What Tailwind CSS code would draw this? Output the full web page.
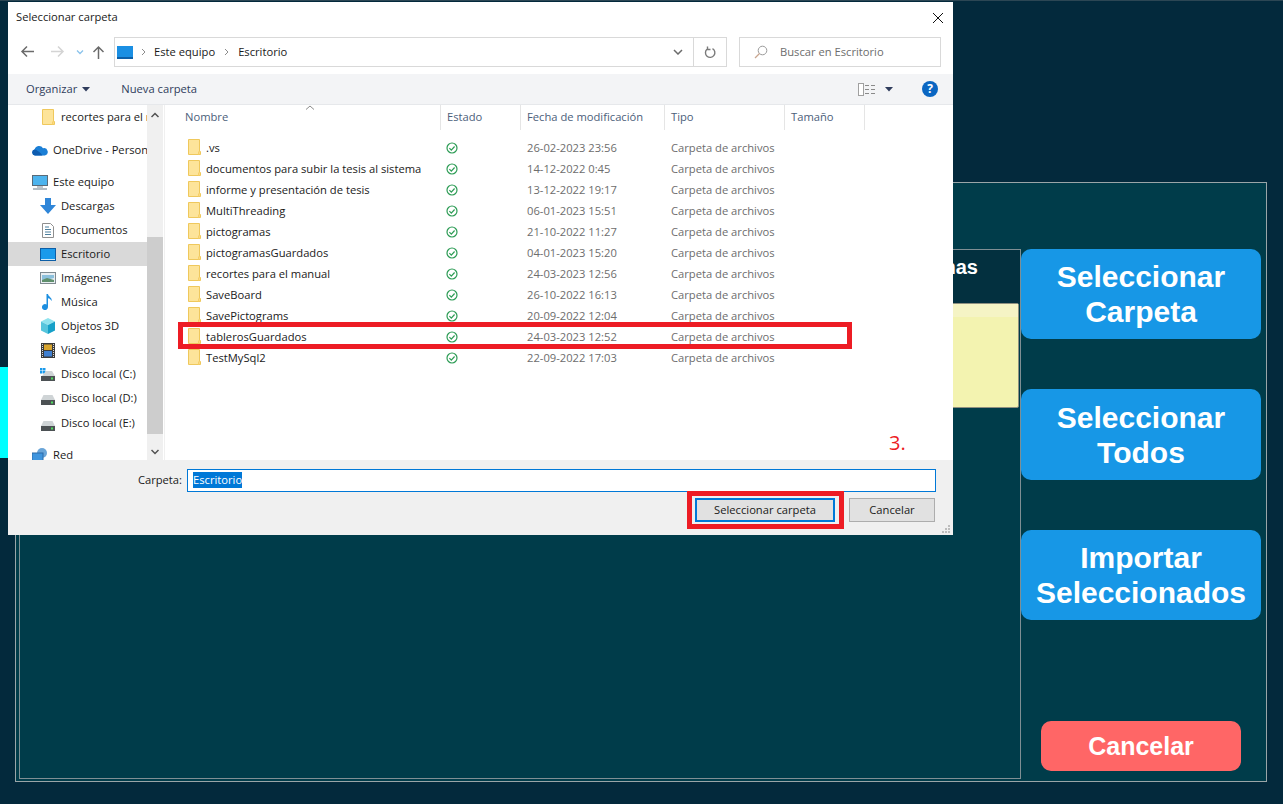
<!DOCTYPE html>
<html lang="es">
<head>
    <meta charset="UTF-8">
    <title>Seleccionar carpeta</title>
    <script src="https://cdn.jsdelivr.net/npm/@tailwindcss/browser@4"></script>
</head>
<body class="bg-[#03293c]">

    <svg class="hidden">
        <symbol id="folder" viewBox="0 0 13 16">
            <path d="M.5.5h11v12h1v3H.5z" fill="#fde49a" stroke="#efc85c"/>
            <path d="M11.500 11.500v4H10V13z" fill="#f8cf68"/>
        </symbol>
        <symbol id="check" viewBox="0 0 12 12">
            <circle cx="6" cy="6" r="5" fill="none" stroke="#2d9c55" stroke-width="1.200"/>
            <path d="M3.400 6.200l1.900 1.900 3.300-3.600" fill="none" stroke="#2d9c55" stroke-width="1.200"/>
        </symbol>
        <symbol id="drive" viewBox="0 0 14 10">
            <path d="M2.500 0h9l2.500 5H0z" fill="#cfd4d6"/>
            <rect y="5" width="14" height="5" fill="#4c5154"/>
            <rect x="10" y="6.500" width="2" height="2" fill="#4fdc5e"/>
        </symbol>
    </svg>

    <!-- app de fondo -->
    <div class="relative w-[1283px] h-[804px] overflow-hidden font-['Liberation_Sans',sans-serif]">
        <div class="absolute left-0 top-[367px] w-[8px] h-[91px] bg-[#00ffff]"></div>
        <div class="absolute left-0 top-0 w-full h-px bg-[#2c4654]"></div>

        <div class="absolute left-[15px] top-[182px] w-[1252px] h-[600px] border border-[#9aa5a8] bg-[#003c4a] pl-[3px] pt-[66px] flex">
            <div class="w-[1002px] h-[530px] border border-[#7f8f94]">
                <div class="h-[53px] bg-[#03303f] flex justify-end pr-[42px] pt-[6px]">
                    <span class="text-white font-bold text-[20px] leading-[22px]">Pictogramas</span>
                </div>
                <div class="flex justify-end pr-px">
                    <div class="w-[500px] h-[105px] bg-[#f3f3b0] border border-[#8f9080] rounded-[2px]">
                        <div class="h-[13px] bg-[#f5f4c5]"></div>
                    </div>
                </div>
            </div>
            <div class="w-[240px] h-[530px] relative">
                <div class="flex flex-col gap-[50px] text-white font-bold text-[30px] leading-[35px] text-center">
                    <div class="h-[90px] rounded-[10px] bg-[#1797e6] flex items-center justify-center">Seleccionar<br>Carpeta</div>
                    <div class="h-[91px] rounded-[10px] bg-[#1797e6] flex items-center justify-center">Seleccionar<br>Todos</div>
                    <div class="h-[90px] rounded-[10px] bg-[#1797e6] flex items-center justify-center">Importar<br>Seleccionados</div>
                </div>
                <div class="mt-[101px] mx-[20px] h-[50px] pt-[1px] rounded-[10px] bg-[#ff6666] flex items-center justify-center text-white font-bold text-[25px]">Cancelar</div>
            </div>
        </div>

        <!-- dialogo -->
        <div class="absolute left-[8px] top-[2px] w-[945px] h-[533px] bg-white flex flex-col text-[11.200px] text-[#1a1a1a] font-['Open_Sans',sans-serif]">

            <div class="h-[30px] flex items-center justify-between pl-[8px] pr-[8px] shrink-0">
                <span>Seleccionar carpeta</span>
                <svg width="12" height="12" viewBox="0 0 12 12" class="mr-[1px] mt-[1px]"><path d="M1 1l10 10M11 1L1 11" stroke="#111" stroke-width="1"/></svg>
            </div>

            <div class="h-[42px] flex items-start pt-[5px] shrink-0">
                <div class="w-[106px] h-[29px] relative flex items-center">
                    <svg width="15" height="13" viewBox="0 0 15 13" class="ml-[12px]"><path d="M14 6.500H2M7 1.500l-5 5 5 5" fill="none" stroke="#6b6b6b" stroke-width="1.500"/></svg>
                    <svg width="15" height="13" viewBox="0 0 15 13" class="ml-[15px]"><path d="M1 6.500h12M8 1.500l5 5-5 5" fill="none" stroke="#d4d4d4" stroke-width="1.500"/></svg>
                    <svg width="8" height="6" viewBox="0 0 8 6" class="ml-[11px]"><path d="M1 1.500l3 3 3-3" fill="none" stroke="#8ac3ec" stroke-width="1.300"/></svg>
                    <svg width="13" height="14" viewBox="0 0 13 14" class="ml-[8px]"><path d="M6.500 14V2M1.500 7l5-5 5 5" fill="none" stroke="#6b6b6b" stroke-width="1.500"/></svg>
                </div>
                <div class="w-[613px] h-[30px] border border-[#d9d9d9] flex items-center">
                    <div class="w-[16px] h-[13px] ml-[2px] bg-[#1a8fe3] border-b-2 border-[#0c5fa8] shrink-0"></div>
                    <svg width="5" height="8" viewBox="0 0 5 8" class="ml-[8px]"><path d="M1 1l3 3-3 3" fill="none" stroke="#8c8c8c"/></svg>
                    <span class="ml-[8px]">Este equipo</span>
                    <svg width="5" height="8" viewBox="0 0 5 8" class="ml-[9px]"><path d="M1 1l3 3-3 3" fill="none" stroke="#8c8c8c"/></svg>
                    <span class="ml-[9px]">Escritorio</span>
                    <svg width="10" height="6" viewBox="0 0 10 6" class="ml-auto mr-[10px]"><path d="M1 1l4 4 4-4" fill="none" stroke="#6b6b6b" stroke-width="1.500"/></svg>
                    <div class="w-[33px] h-full border-l border-[#d9d9d9] flex items-center justify-center">
                        <svg width="12" height="13" viewBox="0 0 12 13"><path d="M3 3.200a4.700 4.700 0 1 0 5.500-.6M3.500 .5v3h3" fill="none" stroke="#7a7a7a" stroke-width="1.400"/></svg>
                    </div>
                </div>
                <div class="ml-[12px] w-[202px] h-[30px] border border-[#d9d9d9] flex items-center text-[#6d6d6d]">
                    <svg width="14" height="14" viewBox="0 0 14 14" class="ml-[14px]"><circle cx="8.500" cy="5.500" r="4.300" fill="none" stroke="#9a9a9a"/><path d="M5.500 8.500L1 13" stroke="#c9a58f" stroke-width="1.200"/></svg>
                    <span class="ml-[12px]">Buscar en Escritorio</span>
                </div>
            </div>

            <div class="h-[30px] bg-[#f3f4f6] flex items-center shrink-0 text-[#2f3c5c]">
                <span class="ml-[18px]">Organizar</span>
                <svg width="8" height="5" viewBox="0 0 8 5" class="ml-[5px]"><path d="M0 0h8L4 4.500z" fill="#2f3c5c"/></svg>
                <span class="ml-[31px]">Nueva carpeta</span>
                <svg width="17" height="13" viewBox="0 0 17 13" class="ml-auto"><rect x=".5" y=".5" width="5" height="12" fill="#fff" stroke="#a0a0a0"/><path d="M7 2.500h4M13 2.500h4M7 6.500h4M13 6.500h4M7 10.500h4M13 10.500h4" stroke="#8a8a8a"/></svg>
                <svg width="8" height="5" viewBox="0 0 8 5" class="ml-[10px]"><path d="M0 0h8L4 4.500z" fill="#2f3c5c"/></svg>
                <div class="ml-[29px] mr-[15px] w-[16px] h-[16px] rounded-full bg-[#0a66c2] text-white font-bold text-[12px] leading-[16px] text-center">?</div>
            </div>

            <div class="h-[356px] flex border-t border-[#e6e8eb] shrink-0 overflow-hidden">
                <!-- panel izquierdo -->
                <div class="w-[139px] shrink-0 overflow-hidden relative whitespace-nowrap">
                    <div class="h-[24px] flex items-center pl-[34px]">
                        <svg width="13" height="16" class="shrink-0"><use href="#folder"/></svg>
                        <span class="ml-[6px]">recortes para el manual</span>
                    </div>
                    <div class="h-[24px] mt-[9px] flex items-center pl-[24px]">
                        <svg width="16" height="11" viewBox="0 0 16 11" class="shrink-0"><path d="M3 10.500a3 3 0 0 1-.4-5.900A4.500 4.500 0 0 1 11 3.300a3.500 3.500 0 0 1 2 7.200z" fill="#1b7fd6"/><path d="M3 10.500a3 3 0 0 1-.6-5.900c2-.2 6 3 8 5.900z" fill="#0d5cb0"/></svg>
                        <span class="ml-[5px]">OneDrive - Personal</span>
                    </div>
                    <div class="h-[24px] mt-[8px] flex items-center pl-[24px]">
                        <svg width="16" height="15" viewBox="0 0 16 15" class="shrink-0"><rect x=".5" y=".5" width="15" height="10" fill="#4db4ee" stroke="#5a6b78"/><path d="M5 12h6" stroke="#7f8f9a"/><path d="M1 14h14" stroke="#9aa7b0" stroke-width="1.500"/></svg>
                        <span class="ml-[5px]">Este equipo</span>
                    </div>
                    <div class="h-[24px] flex items-center pl-[32px]">
                        <svg width="16" height="16" viewBox="0 0 16 16" class="shrink-0"><path d="M5 0h6v7h5l-8 9-8-9h5z" fill="#2f86d8"/></svg>
                        <span class="ml-[5px]">Descargas</span>
                    </div>
                    <div class="h-[24px] flex items-center pl-[34px]">
                        <svg width="12" height="15" viewBox="0 0 12 15" class="shrink-0"><path d="M.5.5h8l3 3v11H.5z" fill="#fff" stroke="#8f8f8f"/><path d="M3 4h4M3 6.500h6M3 9h6M3 11.500h6" stroke="#4d7f9c"/></svg>
                        <span class="ml-[7px]">Documentos</span>
                    </div>
                    <div class="h-[24px] bg-[#d9d9d9] flex items-center pl-[32px]">
                        <svg width="16" height="13" viewBox="0 0 16 13" class="shrink-0"><rect x=".5" y=".5" width="15" height="12" fill="#1a9aeb" stroke="#0d5ea6"/><path d="M1 11.500h14" stroke="#cfe9fa"/></svg>
                        <span class="ml-[5px]">Escritorio</span>
                    </div>
                    <div class="h-[24px] flex items-center pl-[32px]">
                        <svg width="16" height="12" viewBox="0 0 16 12" class="shrink-0"><rect x=".5" y=".5" width="15" height="11" fill="#e8eef2" stroke="#7f8a90"/><path d="M2 3h12v3l-4 1-8 1z" fill="#8cc0dc"/><path d="M2 8l5-2 7 2v2H2z" fill="#5f8f6c"/></svg>
                        <span class="ml-[5px]">Imágenes</span>
                    </div>
                    <div class="h-[24px] flex items-center pl-[34px]">
                        <svg width="12" height="16" viewBox="0 0 12 16" class="shrink-0"><path d="M4.500 0h1.500c.5 3 4.500 3.500 3.500 7-.7-1.700-2-2.500-3.500-2.800V13a3 3 0 1 1-1.500-2.500z" fill="#1d8fe0"/></svg>
                        <span class="ml-[7px]">Música</span>
                    </div>
                    <div class="h-[24px] flex items-center pl-[32px]">
                        <svg width="16" height="16" viewBox="0 0 16 16" class="shrink-0"><path d="M8 0l7 3.500-7 3.500-7-3.500z" fill="#8fe3ee"/><path d="M1 3.500l7 3.500v9l-7-3.500z" fill="#56c5dc"/><path d="M15 3.500L8 7v9l7-3.500z" fill="#16a0c8"/></svg>
                        <span class="ml-[5px]">Objetos 3D</span>
                    </div>
                    <div class="h-[24px] flex items-center pl-[33px]">
                        <svg width="14" height="15" viewBox="0 0 14 15" class="shrink-0"><rect width="14" height="15" fill="#3b3b3b"/><rect x="3" y="1.500" width="8" height="5.500" fill="#d8a52f"/><rect x="3" y="8" width="8" height="5.500" fill="#3f7fd0"/><path d="M1.500 1v13M12.500 1v13" stroke="#ddd" stroke-dasharray="1 1"/></svg>
                        <span class="ml-[6px]">Videos</span>
                    </div>
                    <div class="h-[24px] flex items-center pl-[32px]">
                        <svg width="16" height="13" viewBox="0 0 16 13" class="shrink-0"><rect width="2.500" height="2.500" fill="#1a9aeb"/><rect x="3" width="2.500" height="2.500" fill="#1a9aeb"/><rect y="3" width="2.500" height="2.500" fill="#1a9aeb"/><rect x="3" y="3" width="2.500" height="2.500" fill="#1a9aeb"/><path d="M6 3h6l3 5H2z" fill="#cfd4d6"/><rect x="1" y="8" width="14" height="5" fill="#4c5154"/><rect x="11" y="9.500" width="2" height="2" fill="#4fdc5e"/></svg>
                        <span class="ml-[5px]">Disco local (C:)</span>
                    </div>
                    <div class="h-[24px] flex items-center pl-[33px]">
                        <svg width="14" height="10" class="shrink-0 mt-[4px]"><use href="#drive"/></svg>
                        <span class="ml-[6px]">Disco local (D:)</span>
                    </div>
                    <div class="h-[25px] pt-[2px] flex items-center pl-[33px]">
                        <svg width="14" height="10" class="shrink-0 mt-[4px]"><use href="#drive"/></svg>
                        <span class="ml-[6px]">Disco local (E:)</span>
                    </div>
                    <div class="h-[18px] mt-[11px] flex items-center pl-[24px]">
                        <svg width="16" height="14" viewBox="0 0 16 14" class="shrink-0"><circle cx="10" cy="5" r="5" fill="#6aa5d8"/><rect y="5" width="11" height="8" fill="#3f95de" stroke="#2a6aa8"/></svg>
                        <span class="ml-[5px]">Red</span>
                    </div>
                </div>

                <!-- barra de scroll -->
                <div class="w-[16px] shrink-0 bg-[#f0f0f0] flex flex-col mr-[1px]">
                    <div class="h-[16px] flex items-center justify-center mt-[2px]">
                        <svg width="8" height="6" viewBox="0 0 8 6"><path d="M.5 5L4 1.500 7.500 5" fill="none" stroke="#505050" stroke-width="1.500"/></svg>
                    </div>
                    <div class="h-[197px] mt-[114px] bg-[#cdcdcd]"></div>
                    <div class="h-[16px] flex items-center justify-center mt-[10px]">
                        <svg width="8" height="6" viewBox="0 0 8 6"><path d="M.5 1L4 4.500 7.500 1" fill="none" stroke="#505050" stroke-width="1.500"/></svg>
                    </div>
                </div>

                <!-- lista -->
                <div class="flex-1 border-l border-[#f0f0f0] relative">
                    <svg width="10" height="5" viewBox="0 0 10 5" class="absolute left-[140px] top-[0px]"><path d="M1 4.500L5 1l4 3.500" fill="none" stroke="#8c8c8c"/></svg>
                    <div class="h-[25px] flex text-[#4c607a] leading-[24px]">
                        <div class="w-[276px] pl-[20px] border-r border-[#e5e5e5]">Nombre</div>
                        <div class="w-[80px] pl-[6px] border-r border-[#e5e5e5]">Estado</div>
                        <div class="w-[144px] pl-[6px] border-r border-[#e5e5e5]">Fecha de modificación</div>
                        <div class="w-[120px] pl-[6px] border-r border-[#e5e5e5]">Tipo</div>
                        <div class="w-[80px] pl-[6px] border-r border-[#e5e5e5]">Tamaño</div>
                    </div>
                    <div class="pt-[8px]">
                        <div class="h-[21px] flex items-center"><svg width="13" height="16" class="ml-[23px] mb-[4px] shrink-0"><use href="#folder"/></svg><span class="w-[245px] pl-[5px] shrink-0">.vs</span><svg width="12" height="12" class="shrink-0 mb-[2px]"><use href="#check"/></svg><span class="w-[144px] ml-[69px] text-[#6d6d6d]">26-02-2023 23:56</span><span class="text-[#6d6d6d]">Carpeta de archivos</span></div>
                        <div class="h-[21px] flex items-center"><svg width="13" height="16" class="ml-[23px] mb-[4px] shrink-0"><use href="#folder"/></svg><span class="w-[245px] pl-[5px] shrink-0">documentos para subir la tesis al sistema</span><svg width="12" height="12" class="shrink-0 mb-[2px]"><use href="#check"/></svg><span class="w-[144px] ml-[69px] text-[#6d6d6d]">14-12-2022 0:45</span><span class="text-[#6d6d6d]">Carpeta de archivos</span></div>
                        <div class="h-[21px] flex items-center"><svg width="13" height="16" class="ml-[23px] mb-[4px] shrink-0"><use href="#folder"/></svg><span class="w-[245px] pl-[5px] shrink-0">informe y presentación de tesis</span><svg width="12" height="12" class="shrink-0 mb-[2px]"><use href="#check"/></svg><span class="w-[144px] ml-[69px] text-[#6d6d6d]">13-12-2022 19:17</span><span class="text-[#6d6d6d]">Carpeta de archivos</span></div>
                        <div class="h-[21px] flex items-center"><svg width="13" height="16" class="ml-[23px] mb-[4px] shrink-0"><use href="#folder"/></svg><span class="w-[245px] pl-[5px] shrink-0">MultiThreading</span><svg width="12" height="12" class="shrink-0 mb-[2px]"><use href="#check"/></svg><span class="w-[144px] ml-[69px] text-[#6d6d6d]">06-01-2023 15:51</span><span class="text-[#6d6d6d]">Carpeta de archivos</span></div>
                        <div class="h-[21px] flex items-center"><svg width="13" height="16" class="ml-[23px] mb-[4px] shrink-0"><use href="#folder"/></svg><span class="w-[245px] pl-[5px] shrink-0">pictogramas</span><svg width="12" height="12" class="shrink-0 mb-[2px]"><use href="#check"/></svg><span class="w-[144px] ml-[69px] text-[#6d6d6d]">21-10-2022 11:27</span><span class="text-[#6d6d6d]">Carpeta de archivos</span></div>
                        <div class="h-[21px] flex items-center"><svg width="13" height="16" class="ml-[23px] mb-[4px] shrink-0"><use href="#folder"/></svg><span class="w-[245px] pl-[5px] shrink-0">pictogramasGuardados</span><svg width="12" height="12" class="shrink-0 mb-[2px]"><use href="#check"/></svg><span class="w-[144px] ml-[69px] text-[#6d6d6d]">04-01-2023 15:20</span><span class="text-[#6d6d6d]">Carpeta de archivos</span></div>
                        <div class="h-[21px] flex items-center"><svg width="13" height="16" class="ml-[23px] mb-[4px] shrink-0"><use href="#folder"/></svg><span class="w-[245px] pl-[5px] shrink-0">recortes para el manual</span><svg width="12" height="12" class="shrink-0 mb-[2px]"><use href="#check"/></svg><span class="w-[144px] ml-[69px] text-[#6d6d6d]">24-03-2023 12:56</span><span class="text-[#6d6d6d]">Carpeta de archivos</span></div>
                        <div class="h-[21px] flex items-center"><svg width="13" height="16" class="ml-[23px] mb-[4px] shrink-0"><use href="#folder"/></svg><span class="w-[245px] pl-[5px] shrink-0">SaveBoard</span><svg width="12" height="12" class="shrink-0 mb-[2px]"><use href="#check"/></svg><span class="w-[144px] ml-[69px] text-[#6d6d6d]">26-10-2022 16:13</span><span class="text-[#6d6d6d]">Carpeta de archivos</span></div>
                        <div class="h-[21px] flex items-center"><svg width="13" height="16" class="ml-[23px] mb-[4px] shrink-0"><use href="#folder"/></svg><span class="w-[245px] pl-[5px] shrink-0">SavePictograms</span><svg width="12" height="12" class="shrink-0 mb-[2px]"><use href="#check"/></svg><span class="w-[144px] ml-[69px] text-[#6d6d6d]">20-09-2022 12:04</span><span class="text-[#6d6d6d]">Carpeta de archivos</span></div>
                        <div class="h-[21px] flex items-center"><svg width="13" height="16" class="ml-[23px] mb-[4px] shrink-0"><use href="#folder"/></svg><span class="w-[245px] pl-[5px] shrink-0">tablerosGuardados</span><svg width="12" height="12" class="shrink-0 mb-[2px]"><use href="#check"/></svg><span class="w-[144px] ml-[69px] text-[#6d6d6d]">24-03-2023 12:52</span><span class="text-[#6d6d6d]">Carpeta de archivos</span></div>
                        <div class="h-[21px] flex items-center"><svg width="13" height="16" class="ml-[23px] mb-[4px] shrink-0"><use href="#folder"/></svg><span class="w-[245px] pl-[5px] shrink-0">TestMySql2</span><svg width="12" height="12" class="shrink-0 mb-[2px]"><use href="#check"/></svg><span class="w-[144px] ml-[69px] text-[#6d6d6d]">22-09-2022 17:03</span><span class="text-[#6d6d6d]">Carpeta de archivos</span></div>
                    </div>
                    <!-- marca roja sobre la fila -->
                    <div class="absolute left-[13px] top-[217px] w-[674px] h-[27px] border-[5px] border-[#ed1c24]"></div>
                    <span class="absolute left-[724px] top-[326px] text-[20px] leading-[24px] text-[#ed1c24]">3.</span>
                </div>
            </div>

            <div class="flex-1 bg-[#f0f0f0] relative">
                <div class="flex items-center h-[22px] mt-[9px]">
                    <span class="w-[174px] text-right">Carpeta:</span>
                    <div class="ml-[5px] w-[749px] h-[23px] bg-white border border-[#0078d7] flex items-center pl-[5px]">
                        <span class="bg-[#0078d7] text-white leading-[16px]">Escritorio</span>
                    </div>
                </div>
                <div class="flex justify-end mt-[7px] mr-[18px]">
                    <div class="pl-[3px] pr-[4px] py-[2px] border-[5px] border-[#ed1c24] -my-[7px] mr-[5px]">
                        <div class="w-[140px] h-[24px] bg-[#e1e1e1] border-2 border-[#0078d7] flex items-center justify-center">Seleccionar carpeta</div>
                    </div>
                    <div class="w-[86px] h-[24px] bg-[#e1e1e1] border border-[#adadad] flex items-center justify-center">Cancelar</div>
                </div>
                <svg width="10" height="10" viewBox="0 0 10 10" class="absolute right-[2px] bottom-[1px]"><path d="M7 1h2v2H7zM4 4h2v2H4zM7 4h2v2H7zM1 7h2v2H1zM4 7h2v2H4zM7 7h2v2H7z" fill="#bdbdbd"/></svg>
            </div>
        </div>
    </div>

</body>
</html>
